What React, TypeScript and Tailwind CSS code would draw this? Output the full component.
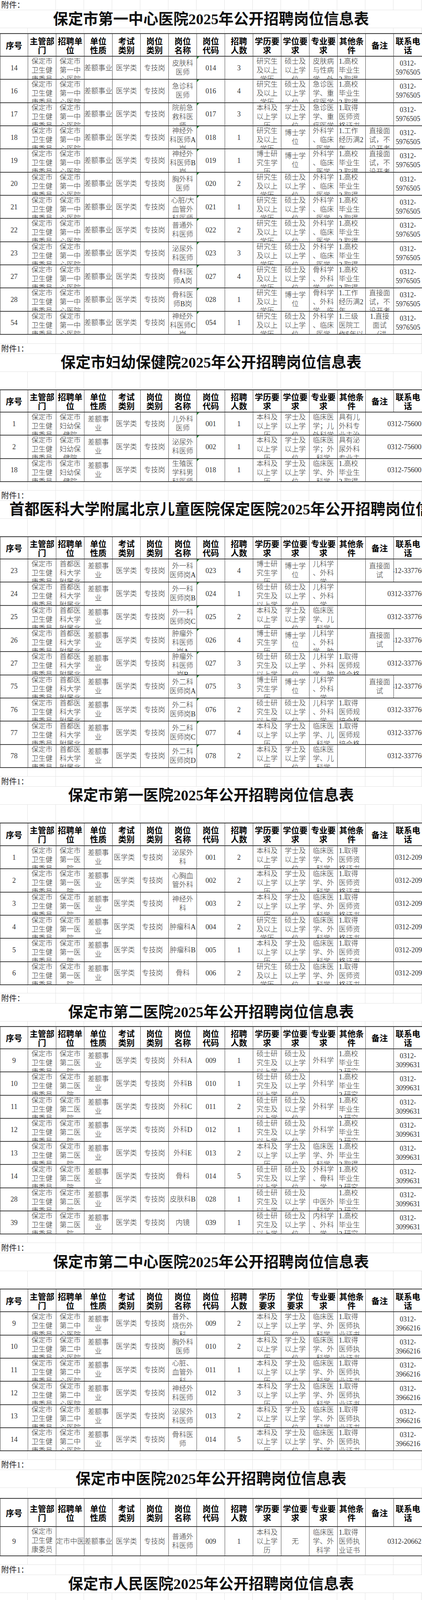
import clsx from 'clsx'

type Row = { c: string[]; tri?: number[]; bold?: number[] }

type Section = {
  label: string
  title: string
  titleLeft?: boolean
  gapTop?: string
  gapMid: string
  headH: string
  head?: string[]
  headLeft?: boolean
  rowH: string
  left?: number[]
  base: string[]
  phone: string
  spill?: boolean
  codeTri?: boolean
  rows: Row[]
}

const HEAD = ['序号', '主管部|门', '招聘单|位', '单位|性质', '考试|类别', '岗位|类别', '岗位|名称', '岗位|代码', '招聘|人数', '学历要|求', '学位要|求', '专业要|求', '其他条|件', '备注', '联系电|话']
const HEAD6 = HEAD.map((h, i) => (i === 9 ? '学历|要求' : i === 10 ? '学位|要求' : h))

const COLW = ['w-[71px]', 'w-[72px]', 'w-[72px]', 'w-[72px]', 'w-[72px]', 'w-[72px]', 'w-[72px]', 'w-[72px]', 'w-[72px]', 'w-[72px]', 'w-[72px]', 'w-[72px]', 'w-[72px]', 'w-[72px]', 'w-[72px]']

// shared cell texts, "|" marks a line break as wrapped in the sheet
const DEPT = '保定市|卫生健|康委员|会'
const R = '研究生|及以上|学历'
const M = '硕士及|以上学|位'
const B = '本科及|以上学|历'
const BS = '学士及|以上学|位'
const DR = '博士研|究生学|历'
const DD = '博士学|位'
const SR = '硕士研|究生及|以上学'
const WK = '外科学|、临床|医学'
const LC = '临床医|学、外|科学'
const G = '1.高校|毕业生|2.取得'
const GY = '1.高校|毕业生|2.研究'
const Q = '1.取得|医师资|格证书'
const Z = '1.取得|医师执|业证书'
const TS = '直接面|试，不|设开考'

const SECTIONS: Section[] = [
  {
    label: '附件：',
    title: '保定市第一中心医院2025年公开招聘岗位信息表',
    gapMid: 'h-[13px]',
    headH: 'h-[58px]',
    rowH: 'h-[59.33px]',
    base: [DEPT, '保定市|第一中|心医院', '差额事业', '医学类', '专技岗'],
    phone: '0312-|5976505',
    codeTri: true,
    rows: [
      { c: ['14', '皮肤科|医师', '014', '3', R, M, '皮肤病|与性病|学、外|科学', G, ''] },
      { c: ['16', '急诊科|医师', '016', '4', R, M, '急诊医|学、重|症医学', G, ''] },
      { c: ['17', '院前急|救科医|师', '017', '3', B, BS, '急诊医|学、重|症医学', Q, ''] },
      { c: ['18', '神经外|科医师A|岗', '018', '1', R, DD, WK, '1.工作|经历满2|年', TS] },
      { c: ['19', '神经外|科医师B|岗', '019', '1', DR, DD, WK, G, TS] },
      { c: ['20', '胸外科|医师', '020', '2', R, M, WK, G, ''] },
      { c: ['21', '心脏/大|血管外|科医师', '021', '1', R, M, WK, G, ''] },
      { c: ['22', '普通外|科医师', '022', '2', R, M, WK, G, ''] },
      { c: ['23', '泌尿外|科医师', '023', '3', R, M, WK, G, ''] },
      { c: ['27', '骨科医|师A岗', '027', '4', R, M, '骨科学|、外科|学、临', G, ''] },
      { c: ['28', '骨科医|师B岗', '028', '1', R, DD, '骨科学|、外科|学、临', '1.工作|经历满2|年', TS] },
      { c: ['54', '神经外|科医师C|岗', '054', '1', R, M, WK, '1.三级|医院工|作5年以', '1.直接|面试|（进'] },
    ],
  },
  {
    label: '附件1：',
    title: '保定市妇幼保健院2025年公开招聘岗位信息表',
    gapTop: 'h-[23px]',
    gapMid: 'h-[45px]',
    headH: 'h-[57px]',
    rowH: 'h-[59.33px]',
    base: [DEPT, '保定市|妇幼保|健院', '差额事|业', '医学类', '专技岗'],
    phone: '0312-7560018',
    spill: true,
    codeTri: true,
    rows: [
      { c: ['1', '儿外科|医师', '001', '1', B, BS, '临床医|学；儿|外科学', '具有儿|外科专|业主治', ''] },
      { c: ['2', '泌尿外|科医师', '002', '1', B, BS, '临床医|学；外|科学', '具有泌|尿外科|专业主', ''] },
      { c: ['18', '生殖医|学科男|科医师', '018', '1', B, BS, LC, G, ''] },
    ],
  },
  {
    label: '附件1：',
    title: '首都医科大学附属北京儿童医院保定医院2025年公开招聘岗位信息表',
    titleLeft: true,
    gapTop: 'h-[22px]',
    gapMid: 'h-[45px]',
    headH: 'h-[57px]',
    rowH: 'h-[59.33px]',
    base: [DEPT, '首都医|科大学|附属北', '差额事|业', '医学类', '专技岗'],
    phone: '0312-3377601',
    spill: true,
    codeTri: true,
    rows: [
      { c: ['23', '外一科|医师岗A', '023', '4', DR, DD, '儿科学|、外科|学', '', '直接面|试'] },
      { c: ['24', '外一科|医师岗B', '024', '1', SR, M, '儿科学|、外科|学', '', ''] },
      { c: ['25', '外一科|医师岗C', '025', '2', B, BS, '临床医|学、儿|科学', '', ''] },
      { c: ['26', '肿瘤外|科医师|岗A', '026', '4', DR, DD, '儿科学|、外科|学、肿', '', '直接面|试'] },
      { c: ['27', '肿瘤外|科医师|岗B', '027', '3', SR, M, '儿科学|、外科|学、肿', '1.取得|医师规|培合格', ''] },
      { c: ['75', '外二科|医师岗A', '075', '3', DR, DD, '儿科学|、外科|学', '', '直接面|试'] },
      { c: ['76', '外二科|医师岗B', '076', '2', SR, M, '儿科学|、外科|学', '1.取得|医师规|培合格', ''] },
      { c: ['77', '外二科|医师岗C', '077', '4', B, BS, '临床医|学、儿|科学', '1.取得|医师规|培合格', ''] },
      { c: ['78', '外二科|医师岗D', '078', '2', B, BS, '临床医|学、儿|科学', '', ''] },
    ],
  },
  {
    label: '附件1：',
    title: '保定市第一医院2025年公开招聘岗位信息表',
    gapTop: 'h-[22px]',
    gapMid: 'h-[46px]',
    headH: 'h-[58px]',
    rowH: 'h-[59.33px]',
    left: [4, 5, 14],
    base: [DEPT, '保定市|第一医|院', '差额事|业', '医学类', '专技岗'],
    phone: '0312-2095566',
    rows: [
      { c: ['1', '泌尿外|科', '001', '2', B, BS, LC, Q, ''] },
      { c: ['2', '心胸血|管外科', '002', '2', B, BS, LC, Q, ''] },
      { c: ['3', '神经外|科', '003', '2', B, BS, LC, Q, ''] },
      { c: ['4', '肿瘤科A', '004', '2', R, M, LC, Q, ''] },
      { c: ['5', '肿瘤科B', '005', '1', B, BS, LC, Q, ''] },
      { c: ['6', '骨科', '006', '2', R, M, LC, Q, ''] },
    ],
  },
  {
    label: '附件：',
    title: '保定市第二医院2025年公开招聘岗位信息表',
    gapTop: 'h-[21px]',
    gapMid: 'h-[12px]',
    headH: 'h-[57px]',
    rowH: 'h-[59.33px]',
    base: [DEPT, '保定市|第二医|院', '差额事|业', '医学类', '专技岗'],
    phone: '0312-|3099631',
    rows: [
      { c: ['9', '外科A', '009', '1', SR, M, '外科学', GY, ''] },
      { c: ['10', '外科B', '010', '1', SR, M, '外科学', GY, ''] },
      { c: ['11', '外科C', '011', '2', SR, M, '外科学', GY, ''] },
      { c: ['12', '外科D', '012', '1', SR, M, '外科学', GY, ''] },
      { c: ['13', '外科E', '013', '2', B, BS, LC, G, ''] },
      { c: ['14', '骨科', '014', '5', SR, M, '外科学|、骨科|学', GY, ''] },
      { c: ['28', '皮肤科B', '028', '1', SR, M, '|中医外|科学', GY, ''] },
      { c: ['39', '内镜', '039', '1', SR, M, '内科学|、外科|学', GY, ''] },
    ],
  },
  {
    label: '附件1：',
    title: '保定市第二中心医院2025年公开招聘岗位信息表',
    gapTop: 'h-[22px]',
    gapMid: 'h-[45px]',
    headH: 'h-[58px]',
    head: HEAD6,
    rowH: 'h-[59.33px]',
    base: [DEPT, '保定市|第二中|心医院', '差额事|业', '医学类', '专技岗'],
    phone: '0312-|3966216',
    rows: [
      { c: ['9', '普外、|烧伤外|科', '009', '2', B, BS, LC, Z, ''] },
      { c: ['10', '胸外科|医师', '010', '2', B, BS, LC, Z, ''] },
      { c: ['11', '心脏、|血管外|科', '011', '1', B, BS, LC, Z, ''] },
      { c: ['12', '神经外|科医师', '012', '3', B, BS, LC, Z, ''] },
      { c: ['13', '泌尿外|科医师', '013', '2', B, BS, LC, Z, ''] },
      { c: ['14', '骨科医|师', '014', '5', B, BS, LC, Z, ''] },
    ],
  },
  {
    label: '附件1：',
    title: '保定市中医院2025年公开招聘岗位信息表',
    gapTop: 'h-[22px]',
    gapMid: 'h-[26px]',
    headH: 'h-[72px]',
    rowH: 'h-[75px]',
    base: [DEPT, '保定市中医院', '差额事业', '医学类', '专技岗'],
    phone: '0312-2066218',
    spill: true,
    rows: [{ c: ['9', '普通外|科医师', '009', '1', B, '无', LC, Z, ''] }],
  },
  {
    label: '附件1：',
    title: '保定市人民医院2025年公开招聘岗位信息表',
    gapTop: 'h-[22px]',
    gapMid: 'h-[25px]',
    headH: 'h-[73px]',
    rowH: 'h-[74.33px]',
    base: [DEPT, '保定市|人民医|院', '差额事业', '医学类', '专技岗'],
    phone: '0312-5888166',
    spill: true,
    rows: [
      { c: ['7', '外科医|师A', '007', '2', R, '硕士及以上学位', LC, Q, ''] },
      { c: ['8', '外科医|师B', '008', '3', B, '学士及以上学位', LC, G, ''], tri: [7] },
      { c: ['11', '中医医师', '011', '2', R, '硕士及以上学位', '中医内|科学、|中医外', G, ''], tri: [7] },
    ],
  },
  {
    label: '附件：',
    title: '广安门医院保定医院2025年公开招聘岗位信息表',
    gapTop: 'h-[22px]',
    gapMid: 'h-[46px]',
    headH: 'h-[66px]',
    headLeft: true,
    rowH: 'h-[67px]',
    base: [DEPT, '广安门|医院保|定医院', '差额事|业', '医学类', '专技岗'],
    phone: '0312-|7929610',
    codeTri: true,
    rows: [
      { c: ['20', '普外肛|肠科A|（医师|岗）', '020', '1', B, BS, LC, '1.具有|副高级|及以上', '有普通|外科工|作经历'] },
      { c: ['21', '普外肛|肠科B|（医师|岗）', '021', '1', R, M, '中医外|科学、|中西医', G, ''] },
      { c: ['22', '普外肛|肠科C|（医师|岗）', '022', '2', DR, DD, '中医外|科学、|中西医', G, '直接面|试'] },
      { c: ['23', '骨一科A|（医师|岗）', '023', '2', R, M, '外科学', G, ''] },
      { c: ['24', '骨一科B|（医师|岗）', '024', '2', R, M, '外科学', G, ''] },
      { c: ['25', '骨一科C|（医师|岗）', '025', '2', DR, DD, '外科学', G, '直接面|试'] },
      { c: ['29', '骨二科C|（医师|岗）', '029', '1', B, BS, LC, '1.具有|副高级|及以上', '有骨科|工作经|历'], tri: [13] },
      { c: ['47', '男科|（医师|岗）', '047', '1', R, M, '中医外|科学', G, ''] },
      { c: ['51', '内镜室|（医师|岗）', '051', '1', R, M, '中医内|科学、|中医外', Q, ''] },
      { c: ['53', '医疗美|容科A|（医师|岗）', '053', '1', B, BS, '中医学|、中医|外科学', '1.具有|中级及|以上职', '有医疗|美容工|作经历'], tri: [12] },
      { c: ['54', '医疗美|容科B|（医师|岗）', '054', '1', R, M, '中医外|科学', Z, ''] },
    ],
  },
  {
    label: '附件1：',
    title: '保定市康复医院2025年公开招聘岗位信息表',
    gapTop: 'h-[23px]',
    gapMid: 'h-[44px]',
    headH: 'h-[51px]',
    headLeft: true,
    rowH: 'h-[185px]',
    left: [2, 3, 4, 5, 6, 11, 14],
    base: [DEPT, '保定市|康复医|院', '差额事业', '医学类', '专技岗'],
    phone: '0312-|5930516',
    codeTri: true,
    rows: [
      {
        c: ['3', '外科医师', '003', '2', B, BS, '外科学|、中西|医结合|临床、|临床医|学、中|西医临|床医学', '取得医|师执业|证书或|高校毕|业生', ''],
        bold: [8],
      },
    ],
  },
]

const Cell = ({
  text,
  w,
  left,
  last,
  tri,
  spillPad,
  className,
}: {
  text: string
  w: string
  left?: boolean
  last?: boolean
  tri?: boolean
  spillPad?: boolean
  className?: string
}) => {
  const lines = text ? text.split('|') : []
  return (
    <div className={clsx('relative h-full shrink-0 overflow-hidden', w, !last && 'border-r border-[#4a4a4a]')}>
      {tri && (
        <span className="absolute left-0 top-0 h-0 w-0 border-r-[6px] border-t-[6px] border-r-transparent border-t-[#2a8c3c]" />
      )}
      <div className={clsx('flex h-full flex-col pt-[1px]', left && 'pl-[3px]', spillPad && 'pl-[72px]')}>
        <div className={clsx('my-auto flex flex-col', left ? 'items-start' : 'items-center', className)}>
          {lines.map((l, i) => (
            <div key={i} className="whitespace-nowrap">
              {l || '\u00a0'}
            </div>
          ))}
        </div>
      </div>
    </div>
  )
}

const GridRow = ({ h }: { h: string }) => (
  <div className={clsx('flex border-b border-[#e3e3e3]', h)}>
    {COLW.map((w, i) => (
      <div key={i} className={clsx('h-full shrink-0 border-r border-[#e3e3e3]', w)} />
    ))}
  </div>
)

const LabelRow = ({ label }: { label: string }) => (
  <div className="flex h-[26px] border-b border-[#e3e3e3]">
    <div className="h-full w-[143px] shrink-0 border-r border-[#e3e3e3] pl-[3px] text-[20px] leading-[26px] text-[#222]">
      {label}
    </div>
    {COLW.slice(2).map((w, i) => (
      <div key={i} className={clsx('h-full shrink-0 border-r border-[#e3e3e3]', w)} />
    ))}
  </div>
)

const Table = ({ s }: { s: Section }) => {
  const head = s.head ?? HEAD
  return (
    <div className="border-l border-t-2 border-[#3d3d3d]">
      <div className={clsx('flex border-b-2 border-[#3d3d3d]', s.headH)}>
        {head.map((h, i) => (
          <Cell
            key={i}
            text={h}
            w={COLW[i]}
            last={i === 14}
            left={s.headLeft && i === 12}
            className="font-['Noto_Sans_CJK_SC',sans-serif] text-[21px] font-bold leading-[23px] text-black"
          />
        ))}
      </div>
      {s.rows.map((row, ri) => {
        const [no, name, code, num, edu, deg, major, other, remark] = row.c
        const cells = [no, ...s.base, name, code, num, edu, deg, major, other, remark, s.phone]
        const merge = s.spill && !remark
        return (
          <div key={ri} className={clsx('flex border-b-2 border-[#3d3d3d]', s.rowH)}>
            {cells.map((t, i) => {
              if (merge && i === 14) return null
              const tri = (s.codeTri && i === 7) || (row.tri ?? []).includes(i)
              if (merge && i === 13) {
                // empty 备注: the phone number runs over into it, as in the sheet
                return (
                  <Cell
                    key={i}
                    text={s.phone}
                    w="w-[144px]"
                    last
                    spillPad
                    tri={tri}
                    className="text-[18px] font-light leading-[23px]"
                  />
                )
              }
              const left = i === 12 || (s.left ?? []).includes(i)
              return (
                <Cell
                  key={i}
                  text={t}
                  w={COLW[i]}
                  last={i === 14}
                  left={left}
                  tri={tri}
                  className={clsx(
                    'leading-[23px]',
                    (row.bold ?? []).includes(i) ? 'text-[20px] font-bold text-black' : 'text-[18px] font-light'
                  )}
                />
              )
            })}
          </div>
        )
      })}
    </div>
  )
}

const Sheet = ({ s }: { s: Section }) => (
  <section>
    {s.gapTop && <GridRow h={s.gapTop} />}
    <LabelRow label={s.label} />
    <div
      className={clsx(
        'flex h-[46px] items-center overflow-hidden whitespace-nowrap border-b border-[#e3e3e3] text-[38.5px] font-semibold leading-[46px] text-[#111]',
        s.titleLeft ? 'justify-start pl-[24px]' : 'justify-center'
      )}
    >
      {s.title}
    </div>
    <GridRow h={s.gapMid} />
    <Table s={s} />
  </section>
)

export default function App() {
  return (
    <div className="w-[1080px] overflow-hidden bg-white font-['Liberation_Serif','Noto_Sans_CJK_SC',serif] text-[#333]">
      {SECTIONS.map((s, i) => (
        <Sheet key={i} s={s} />
      ))}
    </div>
  )
}
